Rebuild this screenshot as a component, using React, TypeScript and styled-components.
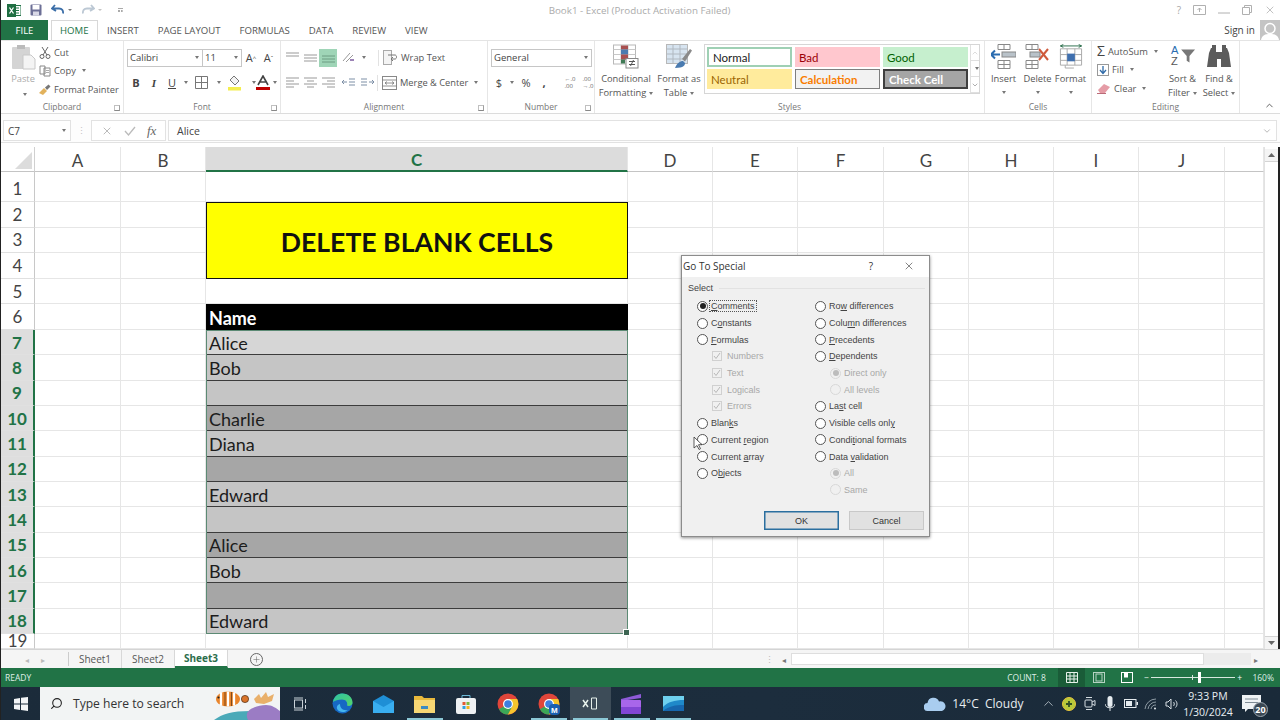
import React from "react";
import styled, { createGlobalStyle } from "styled-components";
import { Search, ChevronUp, ChevronDown, Plus, X } from "lucide-react";

const GlobalStyle = createGlobalStyle`
  html, body { margin: 0; padding: 0; background: #fff; }
  * { box-sizing: border-box; }
`;

const UI = `"Open Sans", "Noto Sans", sans-serif`;
const SHEET = `Lato, "Liberation Sans", sans-serif`;
const DLG = `"Liberation Sans", Arial, sans-serif`;
const GREEN = "#217346";

const Screen = styled.div`
  position: relative;
  width: 1280px;
  height: 720px;
  overflow: hidden;
  display: flex;
  flex-direction: column;
  background: #fff;
  font-family: ${UI};
  border-left: 1px solid #222;
`;

/* title bar */
const TitleBar = styled.div`
  height: 20px;
  display: flex;
  align-items: center;
  padding-left: 6px;
`;
const Qat = styled.div`
  width: 360px;
  display: flex;
  align-items: center;
  gap: 9px;
`;
const QatCaret = styled.span<{ $faint?: boolean }>`
  width: 0;
  height: 0;
  margin-left: -6px;
  border-left: 2px solid transparent;
  border-right: 2px solid transparent;
  border-top: 2.5px solid ${(p) => (p.$faint ? "#c4c4c4" : "#777")};
`;
const QatMore = styled.span`
  width: 5px;
  height: 4px;
  margin-left: 7px;
  border-top: 1px solid #aaa;
  border-bottom: 2px dotted #aaa;
`;
const DocTitle = styled.div`
  flex: 1;
  text-align: center;
  font-size: 9.8px;
  color: #ababab;
  padding-right: 8px;
`;
const WinControls = styled.div`
  width: 360px;
  display: flex;
  justify-content: flex-end;
  align-items: center;
  gap: 12px;
  padding-right: 4px;
  color: #a8a8a8;
  font-size: 10px;
`;

/* tabs */
const TabRow = styled.div`
  height: 20px;
  display: flex;
  align-items: stretch;
  position: relative;
`;
const FileTab = styled.div`
  width: 47px;
  background: ${GREEN};
  color: #fff;
  font-size: 9.5px;
  display: flex;
  align-items: center;
  justify-content: center;
`;
const Tab = styled.div<{ $active?: boolean }>`
  font-size: 9.6px;
  display: flex;
  align-items: center;
  justify-content: center;
  color: ${(p) => (p.$active ? GREEN : "#555")};
  padding: 0 ${(p) => (p.$active ? "8px" : "9.5px")};
  margin-left: ${(p) => (p.$active ? "3px" : "0")};
  border: ${(p) => (p.$active ? "1px solid #d8d8d8" : "none")};
  border-bottom: none;
  background: #fff;
`;
const SignIn = styled.div`
  margin-left: auto;
  display: flex;
  align-items: center;
  gap: 5px;
  font-size: 10px;
  color: #444;
`;
const Avatar = styled.div`
  width: 20px;
  height: 20px;
  background: #c4c4c4;
  display: flex;
  align-items: flex-end;
  justify-content: center;
  overflow: hidden;
`;

/* ribbon */
const Ribbon = styled.div`
  height: 74px;
  display: flex;
  border-top: 1px solid #e4e4e4;
  border-bottom: 1px solid #dcdcdc;
`;
const Group = styled.div<{ $w: number }>`
  width: ${(p) => p.$w}px;
  flex: none;
  display: flex;
  flex-direction: column;
  position: relative;
  border-right: 1px solid #e6e6e6;
`;
const GroupBody = styled.div<{ $pad?: number }>`
  flex: 1;
  display: flex;
  min-height: 0;
  padding-left: ${(p) => p.$pad ?? 0}px;
`;
const GroupLabel = styled.div`
  height: 12px;
  font-size: 8.5px;
  color: #777;
  text-align: center;
  line-height: 12px;
`;
const Launcher = styled.span`
  position: absolute;
  right: 3px;
  bottom: 2px;
  width: 6px;
  height: 6px;
  border-left: 1px solid #c0c0c0;
  border-top: 1px solid #c0c0c0;
  border-right: 1px solid #a0a0a0;
  border-bottom: 1px solid #888;
`;
const PasteColumn = styled.div`
  width: 38px;
  padding-top: 3px;
  padding-left: 6px;
  display: flex;
  flex-direction: column;
  align-items: center;
  font-size: 9.3px;
  line-height: 13px;
  color: #aaa;
  gap: 2px;
  & > i { margin-top: 6px; }
`;
const SmallList = styled.div<{ $pad?: number }>`
  display: flex;
  flex-direction: column;
  padding-top: ${(p) => p.$pad ?? 2}px;
  gap: 0;
`;
const SmallBtn = styled.div`
  height: 18.5px;
  display: flex;
  align-items: center;
  gap: 3px;
  font-size: 9.3px;
  color: #555;
  white-space: nowrap;
`;
const Caret = styled.i`
  display: inline-block;
  width: 0;
  height: 0;
  border-left: 2.5px solid transparent;
  border-right: 2.5px solid transparent;
  border-top: 3px solid #777;
  margin-left: 3px;
  vertical-align: middle;
`;
const TwoRows = styled.div<{ $left: number }>`
  padding: 7.5px 0 0 ${(p) => p.$left}px;
  display: flex;
  flex-direction: column;
  gap: 7px;
`;
const ToolRow = styled.div`
  height: 18px;
  display: flex;
  align-items: center;
`;
const Combo = styled.div<{ $w: number }>`
  width: ${(p) => p.$w}px;
  height: 18px;
  border: 1px solid #c6c6c6;
  display: flex;
  align-items: center;
  justify-content: space-between;
  padding: 0 3px 0 2px;
  font-size: 9.5px;
  color: #444;
  & + & { margin-left: -1px; }
`;
const ToolCell = styled.div<{ $w: number; $on?: boolean }>`
  width: ${(p) => p.$w}px;
  height: 18px;
  flex: none;
  display: flex;
  align-items: center;
  justify-content: center;
  font-size: 11px;
  color: #444;
  background: ${(p) => (p.$on ? "#9fd5b7" : "transparent")};
`;
const BoldGlyph = styled(ToolCell)`
  font-weight: 700;
`;
const ItalicGlyph = styled(ToolCell)`
  font-style: italic;
  font-weight: 700;
  font-family: "Liberation Serif", serif;
`;
const UnderGlyph = styled(ToolCell)`
  text-decoration: underline;
`;
const DecimalGlyph = styled(ToolCell)`
  font-size: 6px;
  line-height: 7px;
  color: #666;
`;
const SizeMark = styled.sup`
  font-size: 6px;
`;
const Divider = styled.span`
  width: 1px;
  height: 16px;
  flex: none;
  background: #e2e2e2;
`;
const LargeBtn = styled.div<{ $w: number }>`
  width: ${(p) => p.$w}px;
  flex: none;
  padding-top: 3px;
  display: flex;
  flex-direction: column;
  align-items: center;
  font-size: 9.3px;
  line-height: 14px;
  color: #555;
  text-align: center;
  white-space: nowrap;
  & > svg { margin-bottom: 3px; height: 25px; }
  & > i { margin: 5px 0 0; }
`;
const Gallery = styled.div`
  width: 276px;
  height: 50px;
  margin: 3px 0 0 1px;
  border: 1px solid #d6d6d6;
  display: flex;
`;
const StyleGrid = styled.div`
  flex: 1;
  padding: 2px;
  display: grid;
  grid-template-columns: repeat(3, 85px);
  grid-template-rows: 20px 20px;
  column-gap: 3px;
  row-gap: 2px;
`;
const StyleChip = styled.div<{ $bg: string; $fg: string; $line?: string; $bold?: boolean }>`
  background: ${(p) => p.$bg};
  color: ${(p) => p.$fg};
  border: ${(p) => (p.$line ? p.$line : "none")};
  font-weight: ${(p) => (p.$bold ? 700 : 400)};
  font-family: ${SHEET};
  font-size: 11.5px;
  padding-left: 4px;
  display: flex;
  align-items: center;
`;
const GalleryArrows = styled.div`
  width: 12px;
  border-left: 1px solid #e0e0e0;
  display: flex;
  flex-direction: column;
  color: #888;
  & > span {
    flex: 1;
    display: flex;
    align-items: center;
    justify-content: center;
    border-bottom: 1px solid #e0e0e0;
  }
`;
const EditingList = styled(SmallList)`
  width: 72px;
  padding-left: 5px;
`;
const SigmaGlyph = styled.span`
  font-size: 14px;
  line-height: 14px;
  color: #444;
`;
const CollapseSlot = styled.div`
  flex: 1;
  position: relative;
  color: #555;
  & > svg { position: absolute; right: 5px; bottom: 2px; }
`;

/* formula bar */
const FormulaRow = styled.div`
  height: 29px;
  padding: 6px 3px 1px 2px;
  display: flex;
  align-items: stretch;
  background: #fdfdfd;
  border-bottom: 1px solid #e2e2e2;
`;
const NameBox = styled.div`
  width: 68px;
  border: 1px solid #e2e2e2;
  display: flex;
  align-items: center;
  justify-content: space-between;
  padding: 0 4px;
  font-size: 10px;
  color: #444;
  background: #fff;
`;
const Grip = styled.div`
  width: 20px;
  text-align: center;
  color: #c4c4c4;
  font-size: 9px;
  line-height: 21px;
`;
const FormulaButtons = styled.div`
  width: 75px;
  border: 1px solid #e2e2e2;
  display: flex;
  align-items: center;
  justify-content: space-around;
  padding: 0 3px;
  color: #bbb;
  background: #fff;
  & > em { font-family: "Liberation Serif", serif; font-size: 13px; color: #666; }
`;
const FormulaInput = styled.div`
  flex: 1;
  margin-left: 2px;
  border: 1px solid #e2e2e2;
  padding-left: 8px;
  font-size: 10.5px;
  color: #444;
  display: flex;
  align-items: center;
  justify-content: space-between;
  background: #fff;
  & > svg { margin-right: 4px; color: #aaa; }
`;

/* sheet */
const SheetArea = styled.div`
  height: 502px;
  margin-top: 4px;
  display: flex;
  overflow: hidden;
`;
const SheetGrid = styled.div`
  position: relative;
  width: 1263px;
  flex: none;
  display: grid;
  grid-template-columns: 34px 86px 85px 422px 85px 85px 86px 85px 85px 85px 86px 39px;
  grid-template-rows: 25px 30px repeat(5, 25.6px) repeat(12, 25.33px) 15px;
`;
const Corner = styled.div`
  border-right: 1px solid #d0d0d0;
  border-bottom: 1px solid #c4c4c4;
  position: relative;
  &::after {
    content: "";
    position: absolute;
    right: 2px;
    bottom: 2px;
    border-style: solid;
    border-width: 0 0 17px 17px;
    border-color: transparent transparent #dcdcdc transparent;
  }
`;
const ColHead = styled.div<{ $active?: boolean }>`
  font-family: ${SHEET};
  font-size: 17px;
  font-weight: ${(p) => (p.$active ? 700 : 400)};
  display: flex;
  align-items: center;
  justify-content: center;
  padding-top: 2px;
  color: ${(p) => (p.$active ? GREEN : "#444")};
  background: ${(p) => (p.$active ? "#dcdcdc" : "#fff")};
  border-right: 1px solid #e6e6e6;
  border-bottom: ${(p) => (p.$active ? `2px solid ${GREEN}` : "1px solid #c4c4c4")};
`;
const RowHead = styled.div<{ $active?: boolean; $low?: boolean }>`
  font-family: ${SHEET};
  font-size: 17px;
  font-weight: ${(p) => (p.$active ? 700 : 400)};
  display: flex;
  align-items: ${(p) => (p.$low ? "flex-end" : "center")};
  justify-content: center;
  padding-bottom: ${(p) => (p.$low ? "2px" : "0")};
  color: ${(p) => (p.$active ? GREEN : "#444")};
  background: ${(p) => (p.$active ? "#dedede" : "#fff")};
  border-right: ${(p) => (p.$active ? `2px solid ${GREEN}` : "1px solid #c8c8c8")};
  border-bottom: 1px solid #e0e0e0;
`;
const Cell = styled.div`
  border-right: 1px solid #e6e6e6;
  border-bottom: 1px solid #e6e6e6;
`;
const TitleCell = styled.div`
  grid-row: span 3;
  background: #ffff00;
  border: 1.5px solid #111;
  font-family: ${SHEET};
  font-weight: 700;
  font-size: 26.6px;
  color: #111;
  display: flex;
  align-items: center;
  justify-content: center;
  padding-top: 3px;
`;
const HeaderCell = styled.div`
  background: #000;
  color: #fff;
  font-family: ${SHEET};
  font-weight: 700;
  font-size: 18px;
  display: flex;
  align-items: center;
  padding: 1px 0 0 3px;
`;
const DataCell = styled.div<{ $fill: string }>`
  background: ${(p) => p.$fill};
  color: #1c1c1c;
  font-family: ${SHEET};
  font-size: 18px;
  display: flex;
  align-items: center;
  padding: 1px 0 0 3px;
  border-bottom: 1px solid #3c3c3c;
`;
const Selection = styled.div`
  position: absolute;
  inset: 0;
  grid-column: 4 / 5;
  grid-row: 8 / 20;
  border: 1.5px solid #5c8a74;
  pointer-events: none;
  &::after {
    content: "";
    position: absolute;
    right: -3px;
    bottom: -3px;
    width: 5px;
    height: 5px;
    background: #3d6553;
    border: 1px solid #fff;
  }
`;
const VScroll = styled.div`
  flex: 1;
  background: #fff;
  border-left: 1px solid #e2e2e2;
  border-right: 2px solid #222;
  display: flex;
  flex-direction: column;
  justify-content: space-between;
  align-items: stretch;
  padding-top: 2px;
  color: #666;
`;
const ScrollEnd = styled.span<{ $top?: boolean }>`
  height: 13px;
  display: flex;
  align-items: center;
  justify-content: center;
  background: #f4f4f4;
  border-bottom: ${(p) => (p.$top ? "1px solid #d4d4d4" : "none")};
  border-top: ${(p) => (p.$top ? "none" : "1px solid #d4d4d4")};
`;

/* sheet tabs */
const SheetBar = styled.div`
  height: 19px;
  display: flex;
  align-items: stretch;
  background: #f5f5f5;
  border-top: 1px solid #d4d4d4;
`;
const TabNav = styled.div`
  width: 68px;
  display: flex;
  align-items: center;
  justify-content: center;
  gap: 12px;
  color: #bbb;
  font-size: 8px;
  border-right: 1px solid #ccc;
  margin: 2px 0;
`;
const SheetTab = styled.div<{ $active?: boolean }>`
  width: 53px;
  display: flex;
  align-items: center;
  justify-content: center;
  font-size: 10px;
  font-weight: ${(p) => (p.$active ? 700 : 400)};
  color: ${(p) => (p.$active ? "#2c6e4c" : "#555")};
  background: ${(p) => (p.$active ? "#fff" : "transparent")};
  border-right: 1px solid #d8d8d8;
  border-bottom: ${(p) => (p.$active ? `2px solid ${GREEN}` : "none")};
`;
const AddSheet = styled.div`
  width: 13px;
  height: 13px;
  margin: 3px 0 0 22px;
  border: 1px solid #666;
  border-radius: 50%;
  color: #666;
  display: flex;
  align-items: center;
  justify-content: center;
`;
const HScroll = styled.div`
  margin-left: auto;
  width: 521px;
  display: flex;
  align-items: center;
  color: #777;
  padding-right: 19px;
  font-size: 8px;
`;
const HGrip = styled.span`
  width: 20px;
  color: #bbb;
  text-align: center;
  font-size: 9px;
`;
const HArrow = styled.span`
  width: 10px;
  text-align: center;
`;
const HThumb = styled.div`
  width: 413px;
  height: 12px;
  margin-left: 2px;
  background: #fff;
  border: 1px solid #dedede;
`;
const HTrack = styled.div`
  flex: 1;
  height: 12px;
  background: #ececec;
`;

/* status bar */
const StatusBar = styled.div`
  height: 19px;
  background: ${GREEN};
  color: #dfeee6;
  font-size: 8.5px;
  display: flex;
  align-items: center;
  padding-left: 4px;
`;
const StatusCount = styled.span`
  margin-left: auto;
  margin-right: 12px;
  font-size: 8.5px;
`;
const ViewBtn = styled.div<{ $on?: boolean }>`
  width: 27.5px;
  height: 19px;
  display: flex;
  align-items: center;
  justify-content: center;
  background: ${(p) => (p.$on ? "#1a5c38" : "transparent")};
`;
const ZoomSlider = styled.div`
  display: flex;
  align-items: center;
  margin-left: 4px;
  gap: 2px;
  color: #fff;
`;
const ZoomTrack = styled.div`
  position: relative;
  width: 84px;
  height: 1px;
  background: #d8e8df;
`;
const ZoomTick = styled.span`
  position: absolute;
  left: 41px;
  top: -2px;
  width: 1px;
  height: 5px;
  background: #d8e8df;
`;
const ZoomThumb = styled.span`
  position: absolute;
  left: 47px;
  top: -5px;
  width: 3px;
  height: 11px;
  background: #fff;
`;
const ZoomValue = styled.span`
  width: 38px;
  padding-right: 6px;
  text-align: right;
  font-size: 8.5px;
`;

/* taskbar */
const Taskbar = styled.div`
  flex: 1;
  background: linear-gradient(90deg, #1b2b3a, #1c2d3d 60%, #1a2a39);
  display: flex;
  align-items: stretch;
  color: #e8eef2;
`;
const StartBtn = styled.div`
  width: 39px;
  display: flex;
  align-items: center;
  justify-content: center;
`;
const SearchBox = styled.div`
  position: relative;
  width: 240px;
  background: #f2f4f4;
  display: flex;
  align-items: center;
  gap: 10px;
  padding-left: 10px;
  color: #333;
  overflow: hidden;
  & > span { font-size: 12.1px; }
`;
const SearchGlass = styled(Search)`
  transform: scaleX(-1);
`;
const SearchArt = styled.svg`
  position: absolute;
  right: 0;
  top: 0;
`;
const TaskIcon = styled.div<{ $open?: boolean; $active?: boolean }>`
  position: relative;
  width: 41.4px;
  flex: none;
  display: flex;
  align-items: center;
  justify-content: center;
  background: ${(p) => (p.$active ? "#3d4c58" : "transparent")};
  &::after {
    content: "";
    display: ${(p) => (p.$open ? "block" : "none")};
    position: absolute;
    left: 3px;
    right: 3px;
    bottom: 0;
    height: 2px;
    background: #8cc8d6;
  }
`;
const Tray = styled.div`
  margin-left: auto;
  display: flex;
  align-items: center;
  padding-right: 16px;
`;
const Weather = styled.div`
  display: flex;
  align-items: center;
  gap: 6px;
  font-size: 12px;
  margin-right: 15px;
  white-space: pre;
`;
const TrayItem = styled.span`
  width: 20.5px;
  display: flex;
  align-items: center;
  justify-content: center;
  color: #cfd8de;
`;
const Clock = styled.div`
  width: 52px;
  text-align: center;
  font-size: 10.5px;
  line-height: 16px;
`;
const Notify = styled.div`
  position: relative;
  margin-left: 8px;
  width: 22px;
  height: 28px;
  display: flex;
  align-items: center;
`;
const NotifyBadge = styled.span`
  position: absolute;
  right: -4px;
  bottom: 1px;
  width: 15px;
  height: 15px;
  border-radius: 50%;
  background: #3b4854;
  border: 1px solid #9aa5ad;
  font-size: 9px;
  font-weight: 700;
  color: #fff;
  display: flex;
  align-items: center;
  justify-content: center;
`;

/* dialog */
const Dialog = styled.div`
  position: absolute;
  left: 680px;
  top: 255px;
  width: 249px;
  height: 282px;
  background: #f0f0f0;
  border: 1px solid #8c8c8c;
  box-shadow: 0 1px 3px rgba(0, 0, 0, 0.45);
  display: flex;
  flex-direction: column;
  font-family: ${DLG};
  font-size: 9px;
  color: #444;
`;
const DialogTitle = styled.div`
  height: 21px;
  background: #fff;
  display: flex;
  align-items: center;
  padding: 0 14px 2px 1px;
  font-family: ${UI};
  font-size: 10px;
  color: #333;
  & > span:first-child { flex: 1; }
  & > svg { margin-left: 30px; }
`;
const SelectLegend = styled.div`
  height: 21px;
  padding: 1px 4px 0 6px;
  display: flex;
  align-items: center;
  gap: 6px;
  color: #444;
  &::after { content: ""; flex: 1; height: 1px; background: #e2e2e2; }
`;
const OptionColumns = styled.div`
  height: 213px;
  padding-left: 15px;
  display: grid;
  grid-template-columns: 118px 1fr;
`;
const OptionList = styled.div`
  display: flex;
  flex-direction: column;
`;
const Option = styled.div<{ $indent?: number; $off?: boolean }>`
  height: 16.7px;
  padding-left: ${(p) => p.$indent ?? 0}px;
  display: flex;
  align-items: center;
  gap: 2px;
  color: ${(p) => (p.$off ? "#a8a8a8" : "#444")};
  white-space: nowrap;
`;
const OptionLabel = styled.span<{ $focus?: boolean }>`
  padding: 0 1px;
  outline: ${(p) => (p.$focus ? "1px dotted #555" : "none")};
`;
const Radio = styled.span<{ $on?: boolean; $off?: boolean }>`
  width: 11px;
  height: 11px;
  flex: none;
  border-radius: 50%;
  background: ${(p) => (p.$off ? "#f0f0f0" : "#fff")};
  border: 1px solid ${(p) => (p.$off ? "#d8d8d8" : "#555")};
  display: flex;
  align-items: center;
  justify-content: center;
  &::after {
    content: "";
    display: ${(p) => (p.$on ? "block" : "none")};
    width: 6px;
    height: 6px;
    border-radius: 50%;
    background: ${(p) => (p.$off ? "#bcbcbc" : "#222")};
  }
`;
const Check = styled.span`
  width: 10px;
  height: 10px;
  flex: none;
  border: 1px solid #d0d0d0;
  color: #b8b8b8;
  display: flex;
  align-items: center;
  justify-content: center;
  margin-right: 2px;
`;
const DialogActions = styled.div`
  display: flex;
  justify-content: flex-end;
  gap: 10px;
  padding: 0 5px 0 0;
`;
const DialogBtn = styled.div<{ $primary?: boolean }>`
  width: 75px;
  height: 19px;
  background: #e1e1e1;
  border: 1px solid ${(p) => (p.$primary ? "#2b6f9f" : "#c8c8c8")};
  box-shadow: ${(p) => (p.$primary ? "inset 0 0 0 0.5px #2b6f9f" : "none")};
  display: flex;
  align-items: center;
  justify-content: center;
  color: #333;
`;
const Pointer = styled.svg`
  position: absolute;
  left: 11px;
  top: 180px;
`;

/* icons */
const ExcelLogo = () => (
  <svg width="14" height="13" viewBox="0 0 14 13">
    <rect x="6" y="1.500" width="8" height="10" fill="#fff" stroke="#217346" />
    <path d="M8 4h4M8 6.500h4M8 9h4" stroke="#217346" />
    <rect x="0" y="0" width="9" height="13" fill="#1f6e42" />
    <path d="M2.500 3.500l4 6M6.500 3.500l-4 6" stroke="#fff" strokeWidth="1.300" />
  </svg>
);
const SaveIcon = () => (
  <svg width="12" height="12" viewBox="0 0 12 12">
    <rect x="0.500" y="0.500" width="11" height="11" rx="1" fill="#6c6f96" />
    <rect x="2.500" y="1" width="7" height="4.500" fill="#fff" />
    <rect x="3" y="7.500" width="6" height="4" fill="#d8d8e6" />
  </svg>
);
const UndoIcon = ({ c }: { c: string }) => (
  <svg width="14" height="12" viewBox="0 0 14 12">
    <path d="M4 1L1 4.500 5 7M1.500 4.500H8c3 0 4.500 2 4 5" fill="none" stroke={c} strokeWidth="1.800" />
  </svg>
);
const RedoIcon = ({ c }: { c: string }) => (
  <svg width="14" height="12" viewBox="0 0 14 12">
    <path d="M10 1l3 3.500L9 7M12.500 4.500H6c-3 0-4.500 2-4 5" fill="none" stroke={c} strokeWidth="1.800" />
  </svg>
);
const PasteIcon = () => (
  <svg width="25" height="26" viewBox="0 0 25 26">
    <rect x="1" y="3" width="18" height="22" rx="1" fill="#d4d4d4" />
    <rect x="6" y="1" width="8" height="4" fill="#bbb" />
    <path d="M12 11h8l4 4v10H12z" fill="#f4f4f4" stroke="#c8c8c8" />
  </svg>
);
const ScissorsIcon = () => (
  <svg width="12" height="13" viewBox="0 0 12 13">
    <circle cx="3" cy="10.500" r="2" fill="none" stroke="#666" />
    <circle cx="9" cy="10.500" r="2" fill="none" stroke="#666" />
    <path d="M4 9L9 1M8 9L3 1" stroke="#666" />
  </svg>
);
const CopyIcon = () => (
  <svg width="12" height="12" viewBox="0 0 12 12">
    <path d="M1 1h5v8H1zM5 3h6v8H5z" fill="#fff" stroke="#888" />
    <path d="M7 5.500h3M7 7.500h3" stroke="#aaa" />
  </svg>
);
const PainterIcon = () => (
  <svg width="12" height="11" viewBox="0 0 12 11">
    <path d="M0 9l5-5 3 3-4 4z" fill="#e2b25c" />
    <path d="M6 3.500L9.500 0.500 11.500 2.500 8 6z" fill="#777" />
  </svg>
);
const BorderIcon = () => (
  <svg width="13" height="13" viewBox="0 0 13 13">
    <path d="M.5.500h12v12H.5zM6.500.500v12M.5 6.500h12" fill="none" stroke="#777" />
  </svg>
);
const FillIcon = () => (
  <svg width="14" height="16" viewBox="0 0 14 16">
    <path d="M6 1l5 5-4 4-5-5z" fill="#f3f3f3" stroke="#777" />
    <rect x="0" y="12" width="13" height="3.500" fill="#f4ee4e" />
  </svg>
);
const FontColorIcon = () => (
  <svg width="14" height="15" viewBox="0 0 14 15">
    <path d="M2 10L7 1l5 9M4 7h6" fill="none" stroke="#444" strokeWidth="1.600" />
    <rect y="12" width="14" height="3" fill="#c00000" />
  </svg>
);
const AlignBars = ({ d, c = "#999" }: { d: string; c?: string }) => (
  <svg width="13" height="11" viewBox="0 0 13 11">
    <path d={d} stroke={c} fill="none" />
  </svg>
);
const OrientIcon = () => (
  <svg width="15" height="13" viewBox="0 0 15 13">
    <path d="M2 10L9 2M5 11l7-7" stroke="#999" fill="none" />
    <path d="M9 9h4" stroke="#7b5a9e" strokeWidth="1.500" />
  </svg>
);
const WrapIcon = () => (
  <svg width="15" height="15" viewBox="0 0 15 15">
    <rect x=".5" y=".5" width="8" height="14" fill="#f4f4f4" stroke="#aaa" />
    <path d="M5 5h7c2 0 2 4 0 4H8l2-2m-2 2l2 2" fill="none" stroke="#777" />
  </svg>
);
const MergeIcon = () => (
  <svg width="15" height="14" viewBox="0 0 15 14">
    <rect x=".5" y=".5" width="14" height="13" fill="#fff" stroke="#888" />
    <path d="M.5 4h14M.5 10h14M3 7h9M3 7l2-1.500M3 7l2 1.500M12 7l-2-1.500M12 7l-2 1.500" stroke="#777" fill="none" strokeWidth=".8" />
  </svg>
);
const CondFormatIcon = () => (
  <svg width="26" height="24" viewBox="0 0 26 24">
    <rect x="0.500" y="0.500" width="22" height="19" fill="#fff" stroke="#b8b8b8" />
    <path d="M8 .5v19M15 .5v19M.5 5h22M.5 10h22M.5 15h22" stroke="#c8c8c8" fill="none" />
    <rect x="8" y="1" width="7" height="4" fill="#a85050" />
    <rect x="8" y="5" width="7" height="5" fill="#4a7bb0" />
    <rect x="8" y="10" width="7" height="5" fill="#a85050" />
    <rect x="8" y="15" width="4" height="4" fill="#3f7a55" />
    <rect x="13" y="14" width="12" height="9.500" fill="#fff" stroke="#888" />
    <path d="M16 17h6M16 20h6M20.500 15.500l-3 6" stroke="#555" fill="none" />
  </svg>
);
const TableBrushIcon = () => (
  <svg width="26" height="25" viewBox="0 0 26 25">
    <rect x="0.500" y="0.500" width="21" height="19" fill="#d7e4f0" stroke="#b8b8b8" />
    <path d="M7 .5v19M14 .5v19M.5 5h21M.5 10h21M.5 15h21" stroke="#b0b8c0" fill="none" />
    <path d="M16 15l8-10 2 1.500-7 11z" fill="#8a8a8a" />
    <path d="M9 24c2-5 5-7 8-7l2 2c0 2-1 5-10 5z" fill="#4a7bb0" />
  </svg>
);
const InsertCellsIcon = () => (
  <svg width="25" height="25" viewBox="0 0 25 25">
    <path d="M7 .5h12v5H7zM13 .5v5M7 16.500h12v8H7zM13 16.500v8M7 20.500h12" fill="#fff" stroke="#888" />
    <rect x="11" y="8" width="14" height="5" fill="#b9c2c9" stroke="#888" />
    <path d="M0 10.500h9M4 6.500l-4 4 4 4" fill="none" stroke="#2b6cb0" strokeWidth="2" />
  </svg>
);
const DeleteCellsIcon = () => (
  <svg width="25" height="25" viewBox="0 0 25 25">
    <path d="M1 .5h12v5H1zM7 .5v5M1 16.500h12v8H1zM7 16.500v8M1 20.500h12" fill="#fff" stroke="#888" />
    <rect x="5" y="8" width="10" height="5" fill="#b9c2c9" stroke="#888" />
    <path d="M14 5l9 11M23 5l-9 11" stroke="#cf5a3c" strokeWidth="2" />
  </svg>
);
const FormatCellsIcon = () => (
  <svg width="24" height="26" viewBox="0 0 24 26">
    <path d="M1 5h22v17H1zM8 5v17M16 5v17M1 11h22M1 17h22" fill="#fff" stroke="#aaa" />
    <rect x="8" y="10" width="8" height="8" fill="#3f6fae" />
    <path d="M1 2h22M1 2l3-1.500M1 2l3 1.500M23 2l-3-1.500M23 2l-3 1.500" stroke="#2c6e4c" fill="none" />
    <path d="M6 22v3h9" stroke="#aaa" fill="none" />
  </svg>
);
const EraserIcon = () => (
  <svg width="14" height="12" viewBox="0 0 14 12">
    <path d="M1 8l6-6 6 3-5 6H3z" fill="#e59ca6" />
    <path d="M0 11.500h9" stroke="#bb6b78" />
  </svg>
);
const FillDownIcon = () => (
  <svg width="12" height="12" viewBox="0 0 12 12">
    <rect x=".5" y=".5" width="11" height="11" fill="#fff" stroke="#999" />
    <path d="M6 2v7M3 6l3 3.500L9 6" stroke="#2f6aa8" fill="none" strokeWidth="1.300" />
  </svg>
);
const SortIcon = () => (
  <svg width="28" height="25" viewBox="0 0 28 27">
    <text x="1" y="11" fontSize="12" fill="#2b6cb0" fontFamily="Liberation Sans">A</text>
    <text x="1" y="23" fontSize="12" fill="#555" fontFamily="Liberation Sans">Z</text>
    <path d="M12 6h15l-6 7v7l-3-2v-5z" fill="#777" />
  </svg>
);
const BinocularsIcon = () => (
  <svg width="24" height="23" viewBox="0 0 24 23">
    <path d="M2 8l2-5h5v4h6V3h5l2 5 2 14H14v-8h-4v8H0z" fill="#5c5c5c" />
    <rect x="5" y="0" width="4" height="4" fill="#5c5c5c" />
    <rect x="15" y="0" width="4" height="4" fill="#5c5c5c" />
  </svg>
);
const WindowsLogo = () => (
  <svg width="14" height="14" viewBox="0 0 14 14" fill="#f2f5f7">
    <path d="M0 2l6-1v5.500H0zM7 .8L14 0v6.500H7zM0 7.500h6V13l-6-1zM7 7.500h7V14l-7-.9z" />
  </svg>
);
const TaskViewIcon = () => (
  <svg width="15" height="14" viewBox="0 0 15 14" fill="none" stroke="#c9d2d8">
    <rect x="1.500" y="3" width="8" height="8" />
    <path d="M1 1h9M1 13h9M12.500 2v4M12.500 8v4" />
  </svg>
);
const EdgeIcon = () => (
  <svg width="21" height="21" viewBox="0 0 21 21">
    <defs>
      <linearGradient id="edgeA" x1="0" y1="0" x2="1" y2="1">
        <stop offset="0" stopColor="#2fc3a3" />
        <stop offset="1" stopColor="#55d46a" />
      </linearGradient>
    </defs>
    <circle cx="10.500" cy="10.500" r="10" fill="#1668c4" />
    <path d="M1 9C2 3 6 .5 10.500.5c6 0 10 4 10 9 0 3-3 4-5.500 3 1-3-1-6-5-6-4 0-7 1-9 2.500z" fill="url(#edgeA)" />
    <path d="M8 11c0 4 3 7 8 6-2 2-6 3-9 1s-3-6 1-7z" fill="#46b6ee" />
  </svg>
);
const MailIcon = () => (
  <svg width="21" height="18" viewBox="0 0 21 18">
    <path d="M0 6l10.500-6L21 6v12H0z" fill="#1f8fd6" />
    <path d="M0 6l10.500 6L21 6v12H0z" fill="#39aef0" />
  </svg>
);
const FolderIcon = () => (
  <svg width="21" height="18" viewBox="0 0 21 18">
    <path d="M0 1h8l2 2h11v15H0z" fill="#e9b93c" />
    <rect x="0" y="5" width="21" height="13" fill="#f7d774" />
    <rect x="7" y="11" width="7" height="3" fill="#3b8bc4" />
  </svg>
);
const StoreIcon = () => (
  <svg width="20" height="20" viewBox="0 0 20 20">
    <path d="M6 4V1.500h8V4" fill="none" stroke="#6bb9d8" />
    <rect x="0" y="4" width="20" height="16" rx="2" fill="#eef1f3" />
    <rect x="6.500" y="8" width="3" height="3" fill="#e25a33" />
    <rect x="10.500" y="8" width="3" height="3" fill="#7ab83f" />
    <rect x="6.500" y="12" width="3" height="3" fill="#2f9fe0" />
    <rect x="10.500" y="12" width="3" height="3" fill="#f3b51f" />
  </svg>
);
const ChromeIcon = ({ badge }: { badge?: boolean }) => (
  <svg width="22" height="22" viewBox="0 0 22 22">
    <circle cx="11" cy="11" r="10.500" fill="#e0463a" />
    <path d="M11 11l-9.100 5.200A10.500 10.500 0 0 0 11 21.500L16.200 12z" fill="#3ba757" />
    <path d="M11 6h9.100A10.500 10.500 0 0 1 11 21.500L16 12z" fill="#f6c52e" />
    <circle cx="11" cy="11" r="5" fill="#fff" />
    <circle cx="11" cy="11" r="3.800" fill="#3d7fe0" />
    {badge && (
      <>
        <rect x="11" y="11" width="11" height="11" rx="4" fill="#1c5fb0" />
        <text x="13" y="20" fontSize="8" fontWeight="700" fill="#fff" fontFamily="Liberation Sans">M</text>
      </>
    )}
  </svg>
);
const ExcelTaskIcon = () => (
  <svg width="16" height="13" viewBox="0 0 16 13" fill="none">
    <path d="M1 3l5 7M6 3l-5 7" stroke="#e6f0ea" strokeWidth="1.500" />
    <path d="M9.500 1h5v11h-5z" stroke="#e6f0ea" />
  </svg>
);
const ClipIcon = () => (
  <svg width="22" height="20" viewBox="0 0 22 20">
    <path d="M0 5L20 0v4L0 7z" fill="#8e5ad8" />
    <rect x="0" y="6" width="20" height="14" rx="1" fill="#a866ea" />
    <rect x="0" y="13" width="20" height="7" fill="#8246d4" />
  </svg>
);
const PhotosIcon = () => (
  <svg width="21" height="15" viewBox="0 0 21 15">
    <rect width="21" height="15" fill="#1f89c9" />
    <path d="M0 11c5-5 11-7 21-7V0H0z" fill="#6ed0ee" />
    <path d="M0 15c6-5 12-6 21-6v6z" fill="#1766ad" />
  </svg>
);
const CloudIcon = () => (
  <svg width="22" height="14" viewBox="0 0 22 14">
    <path d="M4 14a4 4 0 0 1-.5-8A6 6 0 0 1 15 4.500 4.800 4.800 0 0 1 18 14z" fill="#a9cdef" />
  </svg>
);
const TrayBadge = () => (
  <svg width="14" height="14" viewBox="0 0 14 14">
    <circle cx="7" cy="7" r="6.500" fill="#b9c93a" stroke="#e8c63c" />
    <path d="M7 4v6M4 7h6" stroke="#315026" strokeWidth="1.800" />
  </svg>
);
const MeetIcon = () => (
  <svg width="12" height="15" viewBox="0 0 12 15" fill="none" stroke="#d5dde2">
    <rect x="1" y="4" width="7" height="7" rx="1" />
    <path d="M8 6l3-1.500v5L8 8M2 1.500h6M2 13.500h6" />
  </svg>
);
const MicIcon = () => (
  <svg width="10" height="16" viewBox="0 0 10 16">
    <rect x="2.500" y="0" width="5" height="11" rx="2.500" fill="#e6ecef" />
    <path d="M0 8c0 5 10 5 10 0M5 12v3" stroke="#e6ecef" fill="none" />
  </svg>
);
const BatteryIcon = () => (
  <svg width="14" height="9" viewBox="0 0 14 9">
    <rect x=".5" y=".5" width="11.500" height="8" fill="none" stroke="#e6ecef" />
    <rect x="2" y="2" width="6" height="5" fill="#e6ecef" />
    <rect x="12.500" y="3" width="1.500" height="3" fill="#e6ecef" />
  </svg>
);
const WifiIcon = () => (
  <svg width="14" height="12" viewBox="0 0 14 12" fill="none" stroke="#8d9aa3">
    <path d="M1 11a11 11 0 0 1 11-10M4 11a8 8 0 0 1 8-7M7 11a5 5 0 0 1 5-4" />
    <circle cx="11" cy="10.500" r="1" fill="#e6ecef" stroke="none" />
  </svg>
);
const SoundIcon = () => (
  <svg width="14" height="12" viewBox="0 0 14 12" fill="none" stroke="#d5dde2">
    <path d="M1 4h2l3-3v10L3 8H1zM8.500 4c1 1 1 3 0 4M10.500 2.500c2 2 2 5 0 7" />
  </svg>
);
const NotifyIcon = () => (
  <svg width="19" height="17" viewBox="0 0 19 17">
    <path d="M0 0h19v14H6l-3 3v-3H0z" fill="#eef2f4" />
    <path d="M3 4h13M3 7.500h13" stroke="#7d8a94" />
  </svg>
);
const MiniGrid = ({ c = "#e8f2ec" }: { c?: string }) => (
  <svg width="12" height="11" viewBox="0 0 12 11" fill="none" stroke={c}>
    <path d="M.5.5h11v10H.5zM4 .5v10M8 .5v10M.5 4h11M.5 7h11" />
  </svg>
);
const PageLayoutIcon = () => (
  <svg width="12" height="11" viewBox="0 0 12 11">
    <rect x="0.500" y="0.500" width="11" height="10" fill="none" stroke="#b5d2c2" />
    <rect x="3" y="2" width="6" height="7" fill="none" stroke="#b5d2c2" />
  </svg>
);
const PageBreakIcon = () => (
  <svg width="12" height="11" viewBox="0 0 12 11">
    <rect x="0.500" y="0.500" width="11" height="10" fill="none" stroke="#fff" />
    <rect x="3" y="0.500" width="4" height="5" fill="#fff" />
  </svg>
);
const CheckMark = () => (
  <svg width="8" height="8" viewBox="0 0 8 8" fill="none" stroke="currentColor">
    <path d="M1 4l2 2.500L7 1" />
  </svg>
);
const ScrollArrow = ({ down }: { down?: boolean }) => (
  <svg width="7" height="4" viewBox="0 0 7 4" fill="#666">
    <path d={down ? "M0 0h7L3.500 4z" : "M0 4h7L3.500 0z"} />
  </svg>
);
const FishArt = () => (
  <SearchArt width="66" height="33" viewBox="0 0 66 33">
    <path d="M0 33c8-6 18-9 36-9v9z" fill="#4aa9b8" />
    <path d="M34 33c-3-6 0-10 5-12 4-2 8-3 13-3 6 0 10 3 14 6v9z" fill="#9b7cc4" />
    <path d="M40 12l5-5 2 4 5-6 2 5 6-3-2 7-8 3-8-1z" fill="#e9b06a" />
    <ellipse cx="14" cy="12" rx="12" ry="7.500" fill="#e9852c" />
    <path d="M7 5.500v13M14 4.500v15M20 5.500v13" stroke="#fff" strokeWidth="2.300" />
    <path d="M11 5v14M17.500 5v14" stroke="#3a2410" strokeWidth=".6" />
    <circle cx="31" cy="12" r="3.600" fill="#d9742a" stroke="#4a2a10" strokeWidth=".7" />
    <circle cx="4.500" cy="10.500" r="1.100" fill="#222" />
  </SearchArt>
);

const COLS = ["A", "B", "C", "D", "E", "F", "G", "H", "I", "J", ""];
const LIGHT = "#c5c5c5";
const DARK = "#a6a6a6";
const DATA: Record<number, { text: string; fill: string }> = {
  7: { text: "Alice", fill: "#d6d6d6" },
  8: { text: "Bob", fill: LIGHT },
  9: { text: "", fill: LIGHT },
  10: { text: "Charlie", fill: DARK },
  11: { text: "Diana", fill: LIGHT },
  12: { text: "", fill: DARK },
  13: { text: "Edward", fill: LIGHT },
  14: { text: "", fill: LIGHT },
  15: { text: "Alice", fill: DARK },
  16: { text: "Bob", fill: LIGHT },
  17: { text: "", fill: DARK },
  18: { text: "Edward", fill: LIGHT },
};
const ROWS = Array.from({ length: 19 }, (_, i) => i + 1);

function renderC(row: number) {
  if (row === 2) return <TitleCell key="title">DELETE BLANK CELLS</TitleCell>;
  if (row === 3 || row === 4) return null;
  if (row === 6) return <HeaderCell key="head">Name</HeaderCell>;
  const d = DATA[row];
  if (d) return <DataCell key={`c${row}`} $fill={d.fill}>{d.text}</DataCell>;
  return <Cell key={`c${row}`} />;
}

function Sheet() {
  return (
    <SheetGrid>
      <Corner />
      {COLS.map((c, i) => (
        <ColHead key={i} $active={c === "C"}>{c}</ColHead>
      ))}
      {ROWS.map((r) => (
        <React.Fragment key={r}>
          <RowHead $active={r >= 7 && r <= 18} $low={r === 1}>{r}</RowHead>
          {COLS.map((c, i) =>
            c === "C" ? renderC(r) : <Cell key={i} />
          )}
        </React.Fragment>
      ))}
      <Selection />
    </SheetGrid>
  );
}

function Ribbons() {
  return (
    <Ribbon>
      <Group $w={123}>
        <GroupBody>
          <PasteColumn>
            <PasteIcon />
            <span>Paste</span>
            <Caret />
          </PasteColumn>
          <SmallList>
            <SmallBtn><ScissorsIcon />Cut</SmallBtn>
            <SmallBtn><CopyIcon />Copy<Caret /></SmallBtn>
            <SmallBtn><PainterIcon />Format Painter</SmallBtn>
          </SmallList>
        </GroupBody>
        <GroupLabel>Clipboard</GroupLabel>
        <Launcher />
      </Group>
      <Group $w={157}>
        <GroupBody>
          <TwoRows $left={3}>
            <ToolRow>
              <Combo $w={76}>Calibri<Caret /></Combo>
              <Combo $w={40}>11<Caret /></Combo>
              <ToolCell $w={18}>A<SizeMark>^</SizeMark></ToolCell>
              <ToolCell $w={17}>A<SizeMark>ˇ</SizeMark></ToolCell>
            </ToolRow>
            <ToolRow>
              <BoldGlyph $w={18}>B</BoldGlyph>
              <ItalicGlyph $w={18}>I</ItalicGlyph>
              <UnderGlyph $w={18}>U</UnderGlyph>
              <Caret />
              <ToolCell $w={26}><BorderIcon /></ToolCell>
              <Caret />
              <ToolCell $w={28}><FillIcon /></ToolCell>
              <Caret />
              <ToolCell $w={14}><FontColorIcon /></ToolCell>
              <Caret />
            </ToolRow>
          </TwoRows>
        </GroupBody>
        <GroupLabel>Font</GroupLabel>
        <Launcher />
      </Group>
      <Group $w={207}>
        <GroupBody>
          <TwoRows $left={2}>
            <ToolRow>
              <ToolCell $w={18}><AlignBars d="M0 1h13M0 4h13" /></ToolCell>
              <ToolCell $w={18}><AlignBars d="M0 3h13M0 6h13M0 9h13" /></ToolCell>
              <ToolCell $w={18} $on><AlignBars d="M0 4h13M0 7h13M0 10h13" c="#6c9c82" /></ToolCell>
              <ToolCell $w={22}><OrientIcon /></ToolCell>
              <Caret />
              <ToolCell $w={12} />
              <Divider />
              <ToolCell $w={22}><WrapIcon /></ToolCell>
              <SmallBtn>Wrap Text</SmallBtn>
            </ToolRow>
            <ToolRow>
              <ToolCell $w={18}><AlignBars d="M0 1h13M0 4h8M0 7h13M0 10h8" /></ToolCell>
              <ToolCell $w={18}><AlignBars d="M0 1h13M3 4h7M0 7h13M3 10h7" /></ToolCell>
              <ToolCell $w={18}><AlignBars d="M0 1h13M5 4h8M0 7h13M5 10h8" /></ToolCell>
              <ToolCell $w={22}><AlignBars d="M7 2h6M7 5h6M7 8h6M5 5H0M0 5l2-2M0 5l2 2" c="#7d8fa6" /></ToolCell>
              <ToolCell $w={16}><AlignBars d="M0 2h6M0 5h6M0 8h6M8 5h5M13 5l-2-2M13 5l-2 2" c="#7d8fa6" /></ToolCell>
              <ToolCell $w={2} />
              <Divider />
              <ToolCell $w={22}><MergeIcon /></ToolCell>
              <SmallBtn>Merge &amp; Center<Caret /></SmallBtn>
            </ToolRow>
          </TwoRows>
        </GroupBody>
        <GroupLabel>Alignment</GroupLabel>
        <Launcher />
      </Group>
      <Group $w={107}>
        <GroupBody>
          <TwoRows $left={3}>
            <ToolRow>
              <Combo $w={101}>General<Caret /></Combo>
            </ToolRow>
            <ToolRow>
              <ToolCell $w={16}>$</ToolCell>
              <Caret />
              <ToolCell $w={24}>%</ToolCell>
              <BoldGlyph $w={12}>,</BoldGlyph>
              <ToolCell $w={11} />
              <DecimalGlyph $w={18}>←.0<br />.00</DecimalGlyph>
              <DecimalGlyph $w={18}>.00<br />→.0</DecimalGlyph>
            </ToolRow>
          </TwoRows>
        </GroupBody>
        <GroupLabel>Number</GroupLabel>
        <Launcher />
      </Group>
      <Group $w={390}>
        <GroupBody $pad={2}>
          <LargeBtn $w={58}>
            <CondFormatIcon />
            <span>Conditional</span>
            <span>Formatting<Caret /></span>
          </LargeBtn>
          <LargeBtn $w={48}>
            <TableBrushIcon />
            <span>Format as</span>
            <span>Table<Caret /></span>
          </LargeBtn>
          <Gallery>
            <StyleGrid>
              <StyleChip $bg="#fff" $fg="#222" $line="2px solid #9fd0b4">Normal</StyleChip>
              <StyleChip $bg="#ffc7ce" $fg="#9c0006">Bad</StyleChip>
              <StyleChip $bg="#c6efce" $fg="#006100">Good</StyleChip>
              <StyleChip $bg="#ffeb9c" $fg="#9c6500">Neutral</StyleChip>
              <StyleChip $bg="#f2f2f2" $fg="#fa7d00" $line="1px solid #7f7f7f" $bold>Calculation</StyleChip>
              <StyleChip $bg="#a5a5a5" $fg="#fff" $line="2px double #3f3f3f" $bold>Check Cell</StyleChip>
            </StyleGrid>
            <GalleryArrows>
              <span><ChevronUp size={8} color="#ccc" /></span>
              <span><Caret /></span>
              <span><ChevronDown size={8} /></span>
            </GalleryArrows>
          </Gallery>
        </GroupBody>
        <GroupLabel>Styles</GroupLabel>
      </Group>
      <Group $w={107}>
        <GroupBody $pad={1}>
          <LargeBtn $w={35}>
            <InsertCellsIcon />
            <span>Insert</span>
            <Caret />
          </LargeBtn>
          <LargeBtn $w={33}>
            <DeleteCellsIcon />
            <span>Delete</span>
            <Caret />
          </LargeBtn>
          <LargeBtn $w={33}>
            <FormatCellsIcon />
            <span>Format</span>
            <Caret />
          </LargeBtn>
        </GroupBody>
        <GroupLabel>Cells</GroupLabel>
      </Group>
      <Group $w={148}>
        <GroupBody>
          <EditingList $pad={1}>
            <SmallBtn><SigmaGlyph>Σ</SigmaGlyph>AutoSum<Caret /></SmallBtn>
            <SmallBtn><FillDownIcon />Fill<Caret /></SmallBtn>
            <SmallBtn><EraserIcon />Clear<Caret /></SmallBtn>
          </EditingList>
          <LargeBtn $w={37}>
            <SortIcon />
            <span>Sort &amp;</span>
            <span>Filter<Caret /></span>
          </LargeBtn>
          <LargeBtn $w={36}>
            <BinocularsIcon />
            <span>Find &amp;</span>
            <span>Select<Caret /></span>
          </LargeBtn>
        </GroupBody>
        <GroupLabel>Editing</GroupLabel>
      </Group>
      <CollapseSlot><ChevronUp size={11} /></CollapseSlot>
    </Ribbon>
  );
}

function GoToSpecial() {
  return (
    <Dialog>
      <DialogTitle>
        <span>Go To Special</span>
        <span>?</span>
        <X size={12} strokeWidth={1.2} />
      </DialogTitle>
      <SelectLegend>Select</SelectLegend>
      <OptionColumns>
        <OptionList>
          <Option><Radio $on /><OptionLabel $focus><u>C</u>omments</OptionLabel></Option>
          <Option><Radio /><OptionLabel>C<u>o</u>nstants</OptionLabel></Option>
          <Option><Radio /><OptionLabel><u>F</u>ormulas</OptionLabel></Option>
          <Option $indent={15} $off><Check><CheckMark /></Check><OptionLabel>Numbers</OptionLabel></Option>
          <Option $indent={15} $off><Check><CheckMark /></Check><OptionLabel>Text</OptionLabel></Option>
          <Option $indent={15} $off><Check><CheckMark /></Check><OptionLabel>Logicals</OptionLabel></Option>
          <Option $indent={15} $off><Check><CheckMark /></Check><OptionLabel>Errors</OptionLabel></Option>
          <Option><Radio /><OptionLabel>Blan<u>k</u>s</OptionLabel></Option>
          <Option><Radio /><OptionLabel>Current <u>r</u>egion</OptionLabel></Option>
          <Option><Radio /><OptionLabel>Current <u>a</u>rray</OptionLabel></Option>
          <Option><Radio /><OptionLabel>O<u>b</u>jects</OptionLabel></Option>
        </OptionList>
        <OptionList>
          <Option><Radio /><OptionLabel>Ro<u>w</u> differences</OptionLabel></Option>
          <Option><Radio /><OptionLabel>Colu<u>m</u>n differences</OptionLabel></Option>
          <Option><Radio /><OptionLabel><u>P</u>recedents</OptionLabel></Option>
          <Option><Radio /><OptionLabel><u>D</u>ependents</OptionLabel></Option>
          <Option $indent={15} $off><Radio $on $off /><OptionLabel>Direct only</OptionLabel></Option>
          <Option $indent={15} $off><Radio $off /><OptionLabel>All levels</OptionLabel></Option>
          <Option><Radio /><OptionLabel>La<u>s</u>t cell</OptionLabel></Option>
          <Option><Radio /><OptionLabel>Visible cells onl<u>y</u></OptionLabel></Option>
          <Option><Radio /><OptionLabel>Condi<u>t</u>ional formats</OptionLabel></Option>
          <Option><Radio /><OptionLabel>Data <u>v</u>alidation</OptionLabel></Option>
          <Option $indent={15} $off><Radio $on $off /><OptionLabel>All</OptionLabel></Option>
          <Option $indent={15} $off><Radio $off /><OptionLabel>Same</OptionLabel></Option>
        </OptionList>
      </OptionColumns>
      <DialogActions>
        <DialogBtn $primary>OK</DialogBtn>
        <DialogBtn>Cancel</DialogBtn>
      </DialogActions>
      <Pointer width="10" height="15" viewBox="0 0 10 15">
        <path d="M1 1v11l3-2.500 2 4 1.500-.8-2-4H9z" fill="#fff" stroke="#333" strokeWidth=".8" />
      </Pointer>
    </Dialog>
  );
}

export default function App() {
  return (
    <>
      <GlobalStyle />
      <Screen>
        <TitleBar>
          <Qat>
            <ExcelLogo />
            <SaveIcon />
            <UndoIcon c="#3b6ea8" />
            <QatCaret />
            <RedoIcon c="#bcc8d4" />
            <QatCaret $faint />
            <QatMore />
          </Qat>
          <DocTitle>Book1 - Excel (Product Activation Failed)</DocTitle>
          <WinControls>
            <span>?</span>
            <svg width="13" height="10" viewBox="0 0 13 10" fill="none" stroke="#b0b0b0"><path d="M.5.5h12v9H.5zM6.500 7V3M4.500 5l2-2 2 2" /></svg>
            <svg width="12" height="10" viewBox="0 0 12 10" stroke="#b0b0b0"><path d="M0 8h12" /></svg>
            <svg width="10" height="10" viewBox="0 0 10 10" fill="none" stroke="#b0b0b0"><path d="M.5 2.500h7v7h-7zM2.500 2.500v-2h7v7h-2" /></svg>
            <X size={12} color="#a8a8a8" strokeWidth={1.4} />
          </WinControls>
        </TitleBar>
        <TabRow>
          <FileTab>FILE</FileTab>
          <Tab $active>HOME</Tab>
          <Tab>INSERT</Tab>
          <Tab>PAGE LAYOUT</Tab>
          <Tab>FORMULAS</Tab>
          <Tab>DATA</Tab>
          <Tab>REVIEW</Tab>
          <Tab>VIEW</Tab>
          <SignIn>
            Sign in
            <Avatar>
              <svg width="18" height="18" viewBox="0 0 18 18"><circle cx="9" cy="6.500" r="5" fill="none" stroke="#fff" strokeWidth="1.500" /><path d="M0 18c1-5 4-6 9-6s8 1 9 6" fill="#fff" /></svg>
            </Avatar>
          </SignIn>
        </TabRow>
        <Ribbons />
        <FormulaRow>
          <NameBox>C7<Caret /></NameBox>
          <Grip>⋮</Grip>
          <FormulaButtons>
            <X size={12} />
            <svg width="12" height="10" viewBox="0 0 12 10" fill="none" stroke="#bbb" strokeWidth="1.300"><path d="M1 5l3.500 4L11 1" /></svg>
            <em>fx</em>
          </FormulaButtons>
          <FormulaInput>Alice<ChevronDown size={10} /></FormulaInput>
        </FormulaRow>
        <SheetArea>
          <Sheet />
          <VScroll>
            <ScrollEnd $top><ScrollArrow /></ScrollEnd>
            <ScrollEnd><ScrollArrow down /></ScrollEnd>
          </VScroll>
        </SheetArea>
        <SheetBar>
          <TabNav><span>◂</span><span>▸</span></TabNav>
          <SheetTab>Sheet1</SheetTab>
          <SheetTab>Sheet2</SheetTab>
          <SheetTab $active>Sheet3</SheetTab>
          <AddSheet><Plus size={9} strokeWidth={1.4} /></AddSheet>
          <HScroll>
            <HGrip>⋮</HGrip>
            <HArrow>◂</HArrow>
            <HThumb />
            <HTrack />
            <HArrow>▸</HArrow>
          </HScroll>
        </SheetBar>
        <StatusBar>
          READY
          <StatusCount>COUNT: 8</StatusCount>
          <ViewBtn $on><MiniGrid /></ViewBtn>
          <ViewBtn><PageLayoutIcon /></ViewBtn>
          <ViewBtn><PageBreakIcon /></ViewBtn>
          <ZoomSlider>
            <span>−</span>
            <ZoomTrack><ZoomTick /><ZoomThumb /></ZoomTrack>
            <span>+</span>
          </ZoomSlider>
          <ZoomValue>160%</ZoomValue>
        </StatusBar>
        <Taskbar>
          <StartBtn><WindowsLogo /></StartBtn>
          <SearchBox>
            <SearchGlass size={13} color="#222" />
            <span>Type here to search</span>
            <FishArt />
          </SearchBox>
          <TaskIcon><TaskViewIcon /></TaskIcon>
          <TaskIcon><EdgeIcon /></TaskIcon>
          <TaskIcon><MailIcon /></TaskIcon>
          <TaskIcon $open><FolderIcon /></TaskIcon>
          <TaskIcon><StoreIcon /></TaskIcon>
          <TaskIcon><ChromeIcon /></TaskIcon>
          <TaskIcon $open><ChromeIcon badge /></TaskIcon>
          <TaskIcon $open $active><ExcelTaskIcon /></TaskIcon>
          <TaskIcon $open><ClipIcon /></TaskIcon>
          <TaskIcon $open><PhotosIcon /></TaskIcon>
          <Tray>
            <Weather><CloudIcon />{"14°C  Cloudy"}</Weather>
            <TrayItem><ChevronUp size={15} strokeWidth={1.2} /></TrayItem>
            <TrayItem><TrayBadge /></TrayItem>
            <TrayItem><MeetIcon /></TrayItem>
            <TrayItem><MicIcon /></TrayItem>
            <TrayItem><BatteryIcon /></TrayItem>
            <TrayItem><WifiIcon /></TrayItem>
            <TrayItem><SoundIcon /></TrayItem>
            <Clock>9:33 PM<br />1/30/2024</Clock>
            <Notify><NotifyIcon /><NotifyBadge>20</NotifyBadge></Notify>
          </Tray>
        </Taskbar>
        <GoToSpecial />
      </Screen>
    </>
  );
}
